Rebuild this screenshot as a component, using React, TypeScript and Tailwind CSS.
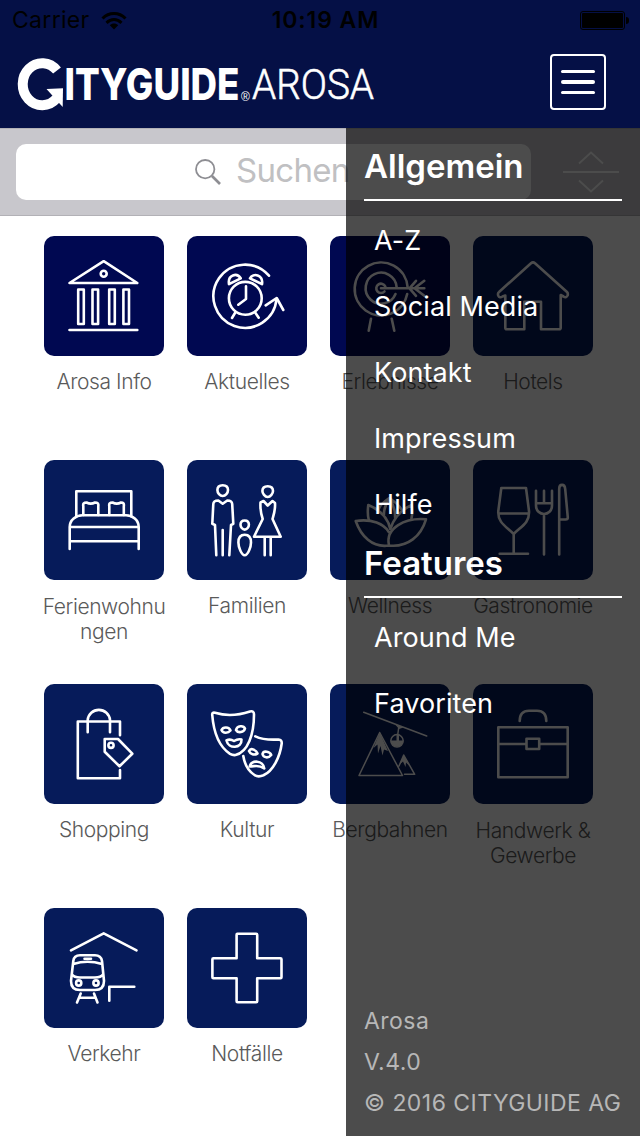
import type { ReactNode } from "react";

type Tile = { label: string; dark?: boolean; icon: ReactNode };

const TILES: Tile[] = [
  {
    label: "Arosa Info",
    dark: true,
    icon: (
      <>
        <path d="M25.5 47 59.7 25.2 93.3 47ZM25.5 94H93.3" />
        <circle cx="59.7" cy="37.7" r="3" />
        <path d="M34.2 53.5h5.6V88h-5.6ZM48.5 53.5h5.6V88h-5.6ZM65.2 53.5h5.6V88h-5.6ZM79.4 53.5H85V88h-5.6Z" />
      </>
    ),
  },
  {
    label: "Aktuelles",
    dark: true,
    icon: (
      <>
        <circle cx="58.3" cy="62.3" r="16.4" />
        <path d="M82 39.7A31.6 31.6 0 1 0 89.5 63" />
        <path d="M78.7 69.3 89.7 62 96.3 74M59 50.3V63L51.3 68.7M48 77 45 82M68.5 77 71.7 81.7" />
        <path d="M42 48.2C40.5 38.5 50 36.5 53.7 42.3ZM63 42.3C66 36.5 76.5 38.5 75 48.2Z" />
      </>
    ),
  },
  {
    label: "Erlebnisse",
    dark: true,
    icon: (
      <>
        <path d="M77.6 51A26.5 26.5 0 1 0 77.2 58" />
        <path d="M66.6 51A15.5 15.5 0 1 0 65.5 58" />
        <path d="M55.3 50.5A4.7 4.7 0 1 0 54.5 55.5" />
        <path d="M51 52.3H94.3M86 44.8 79.5 52.3 86 59.8M94.3 44.8 84.5 52.3 94.3 59.8M41 82.7 38.7 94.7M61.7 82.7 64.3 94.7" />
      </>
    ),
  },
  {
    label: "Hotels",
    icon: (
      <path d="M58 27.2Q60 25.5 62 27.2L94 56Q95.3 57.2 94.6 59.5Q93 62.5 90.5 60.5L87.7 59V91.8Q87.7 93.3 86.2 93.3H68V65.7H51.3V93.3H33.8Q32.3 93.3 32.3 91.8V59.5L29.5 60.5Q26.5 62.5 25.2 59.5Q24.5 57.2 26 56Z" />
    ),
  },
  {
    label: "Ferienwohnu\nngen",
    icon: (
      <>
        <path d="M32.3 56.5V31.3H87.3V56.5M39.3 55V46Q38.5 42.5 42.5 42.5Q46.8 44.7 51 42.5Q55 42.5 54.3 46V55M65.3 55V46Q64.5 42.5 68.5 42.5Q72.8 44.7 77 42.5Q80.5 42.5 79.8 46V55" />
        <path d="M25.7 89V67C25.7 60 32 55.3 38.5 55.3H82C88.5 55.3 94.7 60 94.7 67V89M25.7 67H94.7M25.7 81.2H94.7" />
      </>
    ),
  },
  {
    label: "Familien",
    icon: (
      <>
        <path d="M35.7 25.2C39.5 25.2 41 27.5 41 30C41 33 38.5 36 35.7 36S30.4 33 30.4 30C30.4 27.5 32 25.2 35.7 25.2Z" />
        <path d="M29.3 95.3 28 65 25.3 63.8 26.3 44Q26.5 40.5 31.3 40.5L35.7 43.7 40.3 40.5Q45 40.5 45.2 44L46.3 63.8 44 65 42.3 95.3M35.7 70V95.3" />
        <path d="M57.7 60.5C60.8 60.5 61.9 62.6 61.9 64.8S60 69.6 57.7 69.6S53.5 67 53.5 64.8S54.6 60.5 57.7 60.5ZM57.7 74.7C62 74.7 64 78 64 82.5S61 95.3 57.7 95.3S51.4 87 51.4 82.5S53.5 74.7 57.7 74.7Z" />
        <path d="M80.7 26.2C84.5 26.2 86 28.5 86 31S83.5 37 80.7 37S75.4 33.5 75.4 31S77 26.2 80.7 26.2Z" />
        <path d="M73.5 42.5 76.5 41 80.7 45.5 85.5 41 88 43C88.5 50 87 54 85.5 59L93.7 76.7H67L75.7 59C74 54 73 50 73.5 42.5ZM77.7 77V95.3M83.7 77V95.3" />
      </>
    ),
  },
  {
    label: "Wellness",
    icon: (
      <>
        <path d="M25.7 61C42 58.5 54 64 58.8 72M25.7 61C31 76 42 88 59 85.5M96 59.3C75 57.5 55 68 59 85.5C78 87.5 91 76 96 59.3Z" />
        <path d="M38.7 59.5C37.3 54 37.7 49.5 38.3 45C48 49 57.5 56 60.3 69M81.7 45C73 49 64.5 56 60.3 69M81.7 45C82.5 50 82.5 54 81.5 58.5" />
        <path d="M48.5 49.5C50 45 54 41.5 59.3 38C64.5 41.5 69 45 71.5 49.5M59.3 38C56 44 53.5 49 54 54.5M59.3 38C63 44 65.5 49 65 57" />
      </>
    ),
  },
  {
    label: "Gastronomie",
    icon: (
      <>
        <path d="M28.3 28H53L56 51C56.8 63 48 66.5 40.7 74C33.5 66.5 24.5 63 25.3 51ZM26 53.5H55.5M40.7 74V93.7M26.7 93.7H55" />
        <path d="M63 30.7V45.5C63 51 67 54 71 54S79 51 79 45.5V30.7M71 30.7V43M63 43.2H79M71 54V94.5" />
        <path d="M86.2 94.5V29C86.2 23.5 91.8 23.5 92.2 29L94.8 57.5Q94.8 59.5 92.5 59.5H86.2" />
      </>
    ),
  },
  {
    label: "Shopping",
    icon: (
      <>
        <path d="M76 51.3V37.5H33.8V94.3H76V86M43.7 48.3V36A11.2 11.2 0 0 1 66 36V48.3" />
        <path d="M60.7 55H74L88.3 69.7 75.5 82.3 60.7 67.7Z" />
        <circle cx="67" cy="61.3" r="2.6" />
      </>
    ),
  },
  {
    label: "Kultur",
    icon: (
      <>
        <path d="M25.2 30.5Q25.2 28 28 28.8C40 32.5 51 31.5 63 27.5Q67 26.5 67 30.5C67 50 61 68 48.5 71Q46 71.5 43 69.8C31 62 26.5 47 25.2 30.5Z" />
        <path d="M34.5 46C36 42.5 42 42.5 43.5 46.5C41 49.5 36 49.5 34.5 46ZM49 46C50 41.5 56.5 41 58 44.5C57 48.5 51 49.5 49 46ZM39.5 56.5Q43 54.5 47 57Q51 54.5 54.5 55.5C55 64.5 41.5 65.5 39.5 56.5Z" />
        <path d="M68.3 52.3C76 56 83 56 91.5 55.5Q95 55.7 94.7 59.5C93 73 86 87 76.5 91.3Q71 93.5 67.5 91C60.5 86.5 57.5 79.5 56.3 72" />
        <path d="M62 67C64 63 69.5 66.5 70.5 69.5C67 71.5 63.5 70.5 62 67ZM75.5 70C76.5 66 83 67.5 84.2 71C81.5 74.5 76.5 74 75.5 70ZM62.7 82.5C64 75.5 76.5 76 77.3 84.5C71 80 68 82.5 62.7 82.5Z" />
      </>
    ),
  },
  {
    label: "Bergbahnen",
    icon: (
      <>
        <g strokeWidth="1.5">
          <path d="M33.7 28.3 96.7 52M69 41.7 67.7 51M49.7 48.5 29 91.5H72.5ZM69 82 73.7 71 84.7 90.3H74.5" />
          <circle cx="67" cy="56.8" r="6.2" />
        </g>
        <path
          d="M60.8 56.5H73.2A6.2 6.2 0 0 1 60.8 56.5ZM65 40.3 73.5 43.5 69 45ZM66.5 50.5H69V57H66.5ZM49.7 48.5 43.5 64 47.5 60.5 48 69.5 50.5 62 52.5 71.5 54 65.5 58 67ZM73.7 71 69.5 80.5 73 77.5 75.5 83 76 78.5 79.5 82Z"
          className="fill-white stroke-none"
        />
      </>
    ),
  },
  {
    label: "Handwerk &\nGewerbe",
    icon: (
      <path d="M25.3 43.3H94.7V93.3H25.3ZM25.3 60H53.5M66.2 60H94.7M53.5 54.8H66.2V65H53.5ZM46.7 37C46.7 30 50 26.7 56 26.7H64C70 26.7 73.3 30 73.3 37" />
    ),
  },
  {
    label: "Verkehr",
    icon: (
      <>
        <path d="M27 42.3 59.7 25.3 92.5 42.3M65.3 92.7V78.7H90.3M36.7 85.5 33 94.5M50 85.5 53.5 94.5M35.5 89.7H51.5M40.5 50.7H47" />
        <path d="M36 47.3H51Q57 47.3 58 53L60 73Q60 82 51 82H36Q27 82 27 73L29.3 53Q30 47.3 36 47.3ZM29.3 56Q43.5 51.5 58 56M28 66.5Q30 69.5 36 69.5H51Q57 69.5 59 66.5" />
        <circle cx="34.7" cy="75" r="2.6" />
        <circle cx="52" cy="75" r="2.6" />
      </>
    ),
  },
  {
    label: "Notfälle",
    icon: (
      <path d="M50.3 25.7H69.2Q70.2 25.7 70.2 26.7V50.2H93.5Q94.5 50.2 94.5 51.2V69.3Q94.5 70.3 93.5 70.3H70.2V93.3Q70.2 94.3 69.2 94.3H50.6Q49.6 94.3 49.6 93.3V70.3H26.4Q25.4 70.3 25.4 69.3V51.2Q25.4 50.2 26.4 50.2H49.6V26.7Q49.6 25.7 50.3 25.7Z" />
    ),
  },
];

const SECTIONS = [
  { title: "Allgemein", items: ["A-Z", "Social Media", "Kontakt", "Impressum", "Hilfe"] },
  { title: "Features", items: ["Around Me", "Favoriten"] },
];

function StatusBar() {
  return (
    <div className="grid h-[41px] grid-cols-3 items-center pl-3 pr-[11px] text-[23px] leading-[41px] text-black">
      <div className="flex items-center gap-[11px]">
        <span className="tracking-[0.3px]">Carrier</span>
        <svg width="26" height="20" viewBox="0 0 26 20" fill="none" stroke="currentColor" strokeWidth="3">
          <path d="M1.5 7.5C8 .8 18 .8 24.5 7.5M5.5 11.8C10 7.5 16 7.5 20.5 11.8" />
          <path d="M13 18.5 8.8 14.2C11 12 15 12 17.2 14.2Z" fill="currentColor" stroke="none" />
        </svg>
      </div>
      <span className="justify-self-center whitespace-nowrap pl-2.5 font-semibold tracking-[0.9px]">10:19 AM</span>
      <div className="flex items-center gap-px justify-self-end">
        <div className="h-[19px] w-[45px] rounded-[3px] border border-black p-px">
          <div className="h-full rounded-[1px] bg-black" />
        </div>
        <div className="h-[7px] w-[3px] rounded-r-full bg-black" />
      </div>
    </div>
  );
}

function Logo() {
  return (
    <svg width="364" height="58" viewBox="16 55 364 58" fill="#fff">
      <path d="M57 70.5A19.5 21 0 1 0 56.5 98.5" fill="none" stroke="#fff" strokeWidth="10" />
      <path d="M46.5 89 63 88.3 62.7 107Z" />
      <text x="64.5" y="100" textLength="175" lengthAdjust="spacingAndGlyphs" className="font-['Inter',sans-serif] text-[44px] font-extrabold">
        ITYGUIDE
      </text>
      <text x="241" y="100.5" className="font-['Liberation_Sans',sans-serif] text-[12px]">
        ®
      </text>
      <text
        x="252"
        y="99"
        textLength="122"
        lengthAdjust="spacingAndGlyphs"
        stroke="#fff"
        strokeWidth="0.6"
        className="font-['Roboto',sans-serif] text-[42px] font-light"
      >
        AROSA
      </text>
    </svg>
  );
}

function Header() {
  return (
    <header className="h-32 bg-[#051046]">
      <StatusBar />
      <div className="flex items-start justify-between pl-4 pr-[34px] pt-[13px]">
        <div className="pt-px">
          <Logo />
        </div>
        <button className="flex size-14 flex-col items-center justify-center gap-[7px] rounded-[4px] border-2 border-white">
          <span className="h-[3.5px] w-[34px] rounded-full bg-white" />
          <span className="h-[3.5px] w-[34px] rounded-full bg-white" />
          <span className="h-[3.5px] w-[34px] rounded-full bg-white" />
        </button>
      </div>
    </header>
  );
}

function SearchBar() {
  return (
    <div className="flex h-[88px] items-center border-y border-[#b2b1b6] bg-[#c8c7cc] pl-4 pr-[21px]">
      <div className="flex h-14 w-[515px] items-center rounded-[10px] bg-white pl-[178px]">
        <svg width="28" height="28" viewBox="0 0 28 28" fill="none" stroke="#8e8e93">
          <circle cx="11.2" cy="11.2" r="9.2" strokeWidth="1.8" />
          <path d="M18 18 26 26" strokeWidth="2.6" />
        </svg>
        <span className="pb-0.5 pl-3.5 text-[33px] tracking-[-0.7px] text-[#c0c0c2]">Suchen</span>
      </div>
      <svg className="ml-auto" width="56" height="42" viewBox="0 0 56 42" fill="none" stroke="#fff" strokeWidth="1.8">
        <path d="M16 12.5 28 1.5 40 12.5M0 21H56M16 29.5 28 40.5 40 29.5" />
      </svg>
    </div>
  );
}

function TileButton({ label, dark, icon }: Tile) {
  const twoLines = label.includes("\n");
  return (
    <div className="flex flex-col items-center">
      <div className={`size-[120px] shrink-0 rounded-[10px] ${dark ? "bg-[#000851]" : "bg-[#061b5a]"}`}>
        <svg viewBox="0 0 120 120" fill="none" stroke="#fff" strokeWidth="2.6" strokeLinecap="round" strokeLinejoin="round">
          {icon}
        </svg>
      </div>
      <div
        className={`whitespace-pre text-center text-[21px] leading-[25px] font-light tracking-[-0.4px] text-[#5a5a5a] ${
          twoLines ? "pt-3.5" : "pt-[13px]"
        }`}
      >
        {label}
      </div>
    </div>
  );
}

function Drawer() {
  return (
    <aside className="absolute right-0 top-32 flex h-[1008px] w-[294px] flex-col bg-black/70 pl-[18px] pr-[18px] pt-[13px] text-white">
      {SECTIONS.map((s) => (
        <section key={s.title}>
          <h2 className="mb-2 h-[50px] text-[33px] leading-[50px] font-semibold">{s.title}</h2>
          <div className="mb-[7px] h-0.5 bg-white" />
          <ul className="pl-2.5">
            {s.items.map((item) => (
              <li key={item} className="h-[66px] text-[27px] leading-[66px] tracking-[0.1px]">
                {item}
              </li>
            ))}
          </ul>
        </section>
      ))}
      <footer className="mt-auto whitespace-nowrap pb-3 text-[23px] leading-[41px] tracking-[0.45px] text-[#b7b7b7]">
        <p>Arosa</p>
        <p>V.4.0</p>
        <p>© 2016 CITYGUIDE AG</p>
      </footer>
    </aside>
  );
}

export default function App() {
  return (
    <div className="relative h-[1136px] w-[640px] overflow-hidden bg-white font-['Inter','Liberation_Sans',sans-serif]">
      <Header />
      <SearchBar />
      <main className="grid auto-rows-[224px] grid-cols-[repeat(4,120px)] gap-x-[23px] pl-11 pt-5">
        {TILES.map((t) => (
          <TileButton key={t.label} {...t} />
        ))}
      </main>
      <Drawer />
    </div>
  );
}
